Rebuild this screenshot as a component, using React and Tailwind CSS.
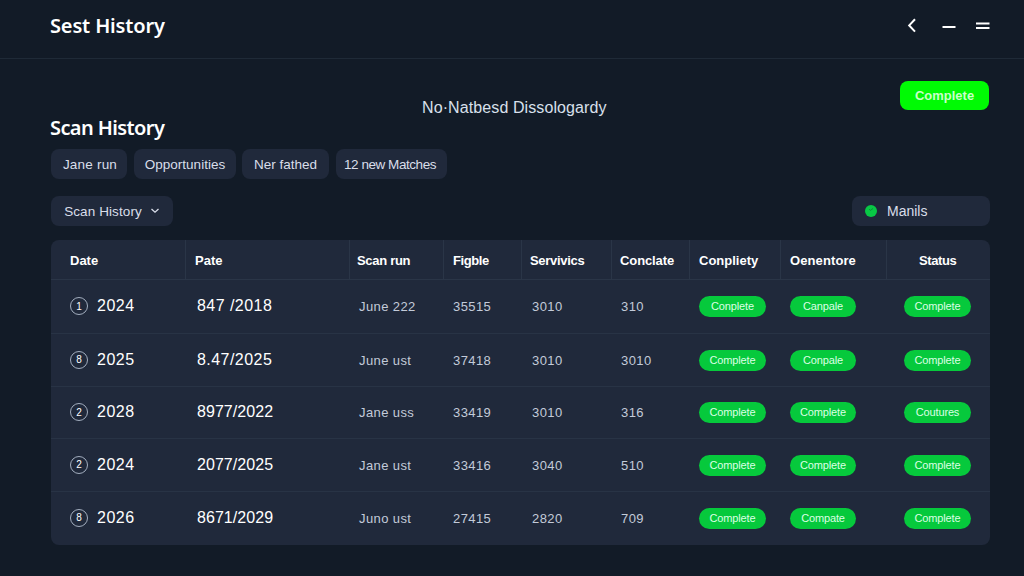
import React from "react";

const columns = [
  { label: "Date", cls: "pl-[19px]" },
  { label: "Pate", cls: "pl-[9px]" },
  { label: "Scan run", cls: "pl-[7px] tracking-[-0.3px]" },
  { label: "Figble", cls: "pl-[9px] tracking-[-0.4px]" },
  { label: "Servivics", cls: "pl-[8px] tracking-[-0.3px]" },
  { label: "Conclate", cls: "pl-[8px] tracking-[-0.1px]" },
  { label: "Conpliety", cls: "pl-[9px]" },
  { label: "Oenentore", cls: "pl-[9px] tracking-[0.1px]" },
  { label: "Status", cls: "pl-[32px] tracking-[-0.4px]" },
];

const rows = [
  { height: "h-[54px]", mark: "1", year: "2024", date: "847 /2018", dateCls: "tracking-[0.45px]", run: "June 222", a: "35515", b: "3010", c: "310", pills: ["Conplete", "Canpale", "Complete"] },
  { height: "h-[53px]", mark: "8", year: "2025", date: "8.47/2025", dateCls: "tracking-[0.45px]", run: "June ust", a: "37418", b: "3010", c: "3010", pills: ["Complete", "Conpale", "Complete"] },
  { height: "h-[52px]", mark: "2", year: "2028", date: "8977/2022", dateCls: "tracking-[0.05px]", run: "Jane uss", a: "33419", b: "3010", c: "316", pills: ["Complete", "Complete", "Coutures"] },
  { height: "h-[53px]", mark: "2", year: "2024", date: "2077/2025", dateCls: "tracking-[0.05px]", run: "Jane ust", a: "33416", b: "3040", c: "510", pills: ["Complete", "Complete", "Complete"] },
  { height: "h-[52px]", mark: "8", year: "2026", date: "8671/2029", dateCls: "tracking-[0.05px]", run: "Juno ust", a: "27415", b: "2820", c: "709", pills: ["Complete", "Compate", "Complete"] },
];

const grid = "grid grid-cols-[135px_164px_94px_78px_90px_78px_91px_106px_103px]";

function Chip({ className, children }) {
  return (
    <button className={`flex h-[30px] items-center justify-center whitespace-nowrap rounded-lg bg-[#20293b] pt-[2px] text-[13.5px] text-[#d9deea] ${className}`}>
      {children}
    </button>
  );
}

function Pill({ className, children }) {
  return (
    <span className={`flex h-[21px] items-center justify-center rounded-full bg-[#06c93c] text-[11px] tracking-[-0.15px] text-[#dcffe4] ${className}`}>
      {children}
    </span>
  );
}

function Header() {
  return (
    <header className="flex h-[59px] items-start justify-between border-b border-[#1f2a37] pl-[50px] pr-[31px]">
      <h1 className="mt-[12px] font-['Noto_Sans'] text-[20px] leading-[28px] font-semibold tracking-[-0.15px] text-white">Sest History</h1>
      <div className="mt-[16px] flex h-5 items-center text-white">
        <svg className="h-5 w-5" viewBox="0 0 20 20" fill="none" stroke="currentColor" strokeWidth="2">
          <path d="M13 3.2 L7.2 9.4 L13 15.6" />
        </svg>
        <svg className="ml-[18px] h-5 w-5" viewBox="0 0 20 20" fill="none" stroke="currentColor" strokeWidth="2">
          <path d="M2.5 11 H15.5" />
        </svg>
        <svg className="ml-[13px] h-5 w-5" viewBox="0 0 20 20" fill="none" stroke="currentColor" strokeWidth="2">
          <path d="M3 7.5 H16.5 M3 12 H16.5" />
        </svg>
      </div>
    </header>
  );
}

function ScanTable() {
  return (
    <div className="mt-[14px] h-[305px] w-[939px] overflow-hidden rounded-lg bg-[#20293b]">
      <div className={`${grid} h-[40px] border-b border-[#2a3547] text-[13px] font-bold text-white`}>
        {columns.map((col, i) => (
          <div key={col.label} className={`flex items-center pt-[2px] ${i < 8 ? "border-r border-[#2a3547]" : ""} ${col.cls}`}>
            {col.label}
          </div>
        ))}
      </div>
      {rows.map((row, i) => (
        <div
          key={i}
          className={`${grid} items-center text-[13px] tracking-[0.4px] text-[#c3cbd9] ${i < 4 ? "border-b border-[#283345]" : ""} ${row.height}`}
        >
          <div className="flex items-center pb-px pl-[19px] text-white">
            <span className="flex size-[18px] items-center justify-center rounded-full border border-[#a3aebf] text-[10px] tracking-normal">{row.mark}</span>
            <span className="ml-[9px] text-[16px] tracking-[0.5px]">{row.year}</span>
          </div>
          <div className={`pb-px pl-[11px] text-[16px] text-white ${row.dateCls}`}>{row.date}</div>
          <div className="pt-px pl-[9px]">{row.run}</div>
          <div className="pt-px pl-[9px]">{row.a}</div>
          <div className="pt-px pl-[10px]">{row.b}</div>
          <div className="pt-px pl-[9px]">{row.c}</div>
          <div className="pl-[9px]"><Pill className="w-[67px]">{row.pills[0]}</Pill></div>
          <div className="pl-[9px]"><Pill className="w-[66px]">{row.pills[1]}</Pill></div>
          <div className="pl-[17px]"><Pill className="w-[67px]">{row.pills[2]}</Pill></div>
        </div>
      ))}
    </div>
  );
}

export default function App() {
  return (
    <div className="h-[576px] w-[1024px] overflow-hidden bg-[#121b27] font-['Liberation_Sans',sans-serif]">
      <Header />
      <main className="pl-[51px] pr-[34px]">
        <div className="flex h-[90px] items-start">
          <h2 className="-ml-px mt-[55px] w-[372px] font-['Noto_Sans'] text-[20px] leading-[28px] font-semibold tracking-[-0.6px] text-white">Scan History</h2>
          <p className="mt-[37px] text-[16px] leading-6 tracking-[0.1px] whitespace-nowrap text-[#d9e0ec]">No·Natbesd Dissologardy</p>
          <button className="mt-[22px] mr-px ml-auto h-[29px] w-[89px] rounded-lg bg-[#00fa04] text-[13px] font-bold text-[#c9ffc9]">Complete</button>
        </div>
        <div className="flex">
          <Chip className="w-[76px] pl-[2px] tracking-[0.2px]">Jane run</Chip>
          <Chip className="ml-[7px] w-[102px]">Opportunities</Chip>
          <Chip className="ml-[6px] w-[87px]">Ner fathed</Chip>
          <Chip className="ml-[7px] w-[111px] pr-[3px] tracking-[-0.45px]">12 new Matches</Chip>
        </div>
        <div className="mt-[17px] flex justify-between">
          <Chip className="w-[122px] tracking-[0.1px]">
            Scan History
            <svg className="ml-2 h-[10px] w-[10px]" viewBox="0 0 10 10" fill="none" stroke="currentColor" strokeWidth="1.3">
              <path d="M1.5 2 L5 5.2 L8.5 2" />
            </svg>
          </Chip>
          <div className="flex h-[30px] w-[138px] items-center rounded-lg bg-[#20293b] pl-[13px] text-[14px] text-[#d9deea]">
            <svg className="size-3" viewBox="0 0 12 12">
              <circle cx="6" cy="6" r="6" fill="#08c845" />
              <path d="M4 4.2 L5.6 5.4 L8 3.4" fill="none" stroke="#0a8f3a" strokeWidth="1" />
            </svg>
            <span className="ml-[10px] pt-px">Manils</span>
          </div>
        </div>
        <ScanTable />
      </main>
    </div>
  );
}
